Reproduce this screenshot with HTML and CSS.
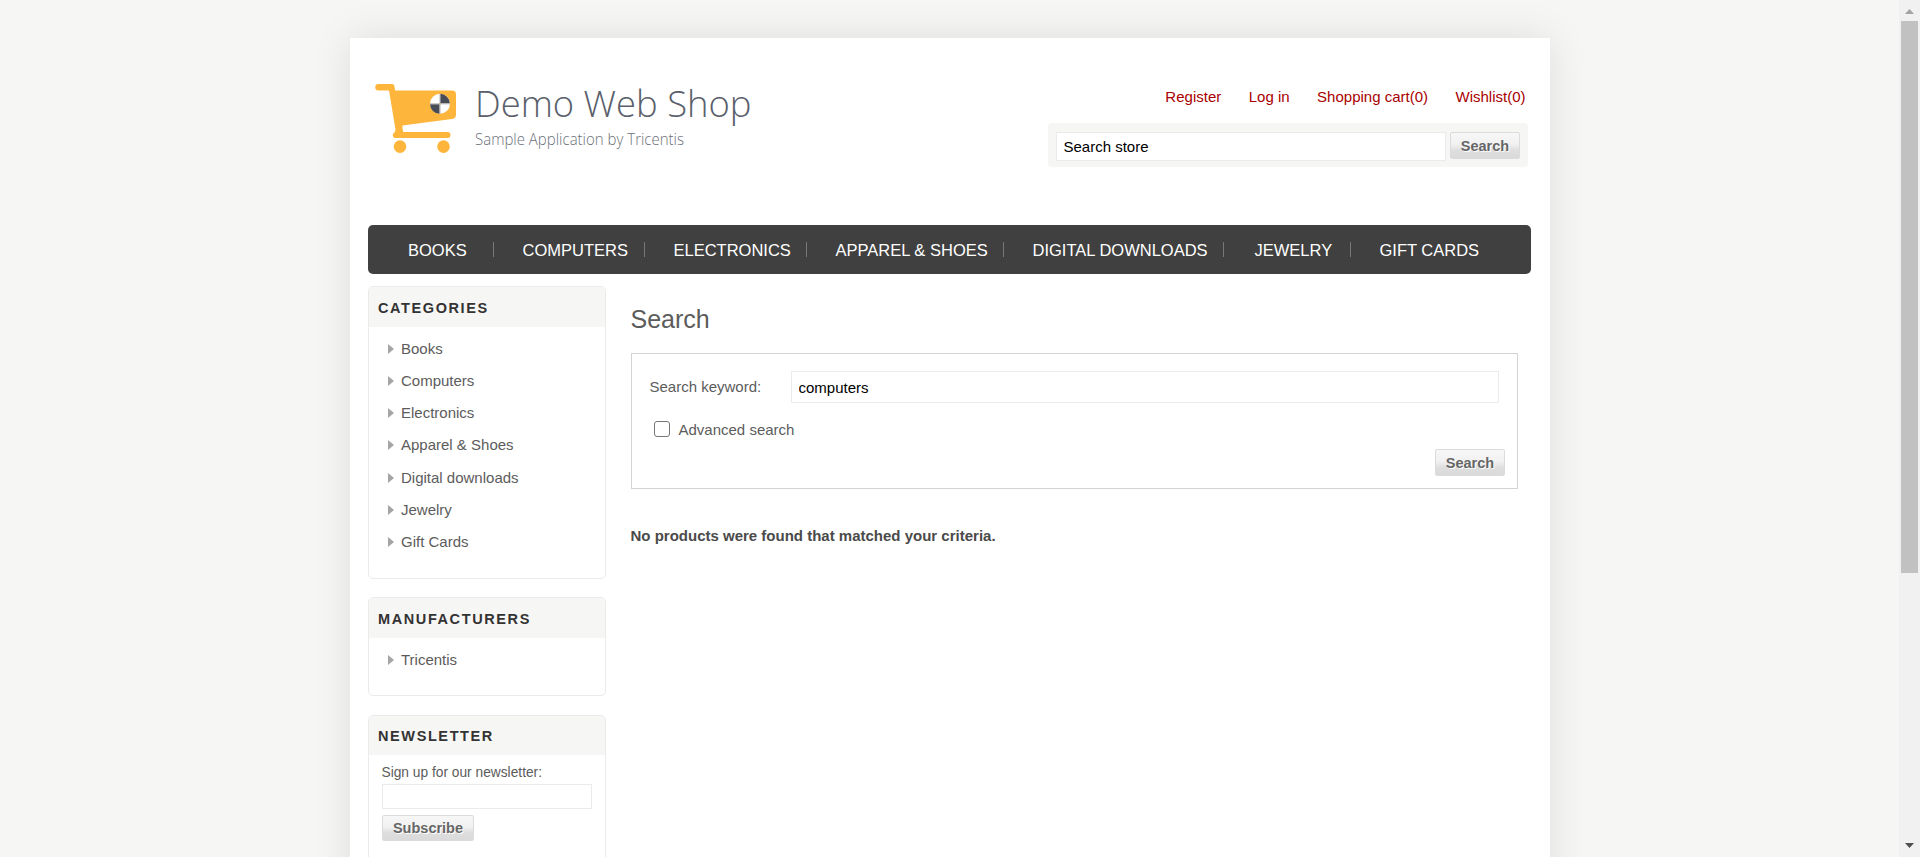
FILE: index.html
```html
<!DOCTYPE html>
<html lang="en">
<head>
<meta charset="utf-8">
<title>Demo Web Shop. Search</title>
<link rel="stylesheet" href="styles.css">
</head>
<body>
<div class="viewport">
  <div class="stage">
    <div class="page">
      <header class="header">
        <svg class="logo" width="400" height="90" viewBox="0 -10 400 90" role="img" aria-label="Demo Web Shop">
          <g fill="#fdb53c">
            <path d="M10.500 6H24a2.500 2.500 0 0 1 2.400 2L27.200 12.500H84q4 0 4 4V36.500q0 4-4 4.500L34.500 47.500V51q1 1 .5 3H79.500a2.900 2.900 0 0 1 0 6H27a3 3 0 0 1-.6-5.600q1.200-.8 1-3.400L21 12.500H10.500a3.250 3.250 0 0 1 0-6.500z"/>
            <circle cx="32" cy="68.600" r="6.300"/>
            <circle cx="75.500" cy="68.600" r="6.300"/>
          </g>
          <circle cx="72" cy="25.800" r="10" fill="#fff"/>
          <path d="M72.300 25.300V15.800a9.700 9.700 0 0 1 9.500 9.500zM71.500 26.300v9.500a9.700 9.700 0 0 1-9.500-9.500z" fill="#474c57"/>
          <path d="M62 25.800H82M72 15.800V35.800" stroke="#a39e94" stroke-width=".8"/>
          <text class="logo-name" x="107" y="39.200" textLength="276.500" lengthAdjust="spacingAndGlyphs">Demo Web Shop</text>
          <text class="logo-tagline" x="107" y="67" textLength="209" lengthAdjust="spacingAndGlyphs">Sample Application by Tricentis</text>
        </svg>
        <div class="header-side">
          <nav class="account-links">
            <a>Register</a><a>Log in</a><a>Shopping cart(0)</a><a>Wishlist(0)</a>
          </nav>
          <form class="search-box">
            <input class="field search-box-field" value="Search store">
            <button type="button" class="button">Search</button>
          </form>
        </div>
      </header>
      <nav class="menu">
        <a class="menu-item menu-books">BOOKS</a>
        <a class="menu-item menu-computers">COMPUTERS</a>
        <a class="menu-item menu-electronics">ELECTRONICS</a>
        <a class="menu-item menu-apparel">APPAREL &amp; SHOES</a>
        <a class="menu-item menu-digital">DIGITAL DOWNLOADS</a>
        <a class="menu-item menu-jewelry">JEWELRY</a>
        <a class="menu-item">GIFT CARDS</a>
      </nav>
      <div class="columns">
        <aside class="sidebar">
          <section class="block block-categories">
            <h2 class="block-title">CATEGORIES</h2>
            <ul class="block-list">
              <li>Books</li><li>Computers</li><li>Electronics</li><li>Apparel &amp; Shoes</li><li>Digital downloads</li><li>Jewelry</li><li>Gift Cards</li>
            </ul>
          </section>
          <section class="block block-manufacturers">
            <h2 class="block-title">MANUFACTURERS</h2>
            <ul class="block-list"><li>Tricentis</li></ul>
          </section>
          <section class="block">
            <h2 class="block-title block-title-newsletter">NEWSLETTER</h2>
            <div class="newsletter">
              <span class="newsletter-label">Sign up for our newsletter:</span>
              <input class="field newsletter-field">
              <button type="button" class="button button-subscribe">Subscribe</button>
            </div>
          </section>
        </aside>
        <main class="main">
          <h1 class="title">Search</h1>
          <form class="search-panel">
            <div class="keyword-row">
              <label class="keyword-label">Search keyword:</label>
              <input class="field keyword-field" value="computers">
            </div>
            <label class="advanced-row"><input type="checkbox" class="checkbox">Advanced search</label>
            <button type="button" class="button panel-button">Search</button>
          </form>
          <strong class="message">No products were found that matched your criteria.</strong>
        </main>
      </div>
    </div>
  </div>
  <div class="scrollbar">
    <svg class="scroll-arrow" width="21" height="21" viewBox="0 0 21 21"><path d="M6 14L10.500 9L15 14z" fill="#a3a3a3"/></svg>
    <div class="scroll-thumb"></div>
    <svg class="scroll-arrow" width="21" height="21" viewBox="0 0 21 21"><path d="M6 7L10.500 12L15 7z" fill="#505050"/></svg>
  </div>
</div>
</body>
</html>
```
FILE: styles.css
```css
* { box-sizing: border-box; }
body {
  margin: 0;
  font-family: "Liberation Sans", Arial, sans-serif;
  font-size: 15px;
  color: #5c5c5c;
}
h1, h2, ul { margin: 0; padding: 0; font-weight: normal; }
.viewport {
  display: flex;
  height: 857px;
  overflow: hidden;
  background: #f6f6f4;
}
.stage {
  flex: 1;
  display: flex;
  justify-content: center;
  padding-top: 38px;
  overflow: hidden;
}
.page {
  width: 1200px;
  height: 1200px;
  flex: none;
  padding: 0 19px 0 18px;
  background: #fff;
  box-shadow: 0 0 38px rgba(0, 0, 0, .1);
}
.header {
  display: flex;
  justify-content: space-between;
  height: 187px;
  padding: 40px 3px 0 0;
}
.logo { display: block; margin-top: -10px; }
.logo-name { font: 300 37px "Open Sans", sans-serif; fill: #5a5f6b; }
.logo-tagline { font: 300 15.500px "Open Sans", sans-serif; fill: #6c707a; }
.header-side { display: flex; flex-direction: column; width: 480px; }
.account-links {
  display: flex;
  justify-content: flex-end;
  gap: 27.500px;
  padding: 10px 2px 0 0;
  height: 45px;
  line-height: 18px;
  color: #a90000;
}
.search-box {
  display: flex;
  align-items: flex-start;
  gap: 4px;
  height: 44px;
  padding: 9px 8px;
  background: #f6f6f4;
  border-radius: 4px;
}
.field {
  display: block;
  border: 1px solid #ebebeb;
  border-radius: 0;
  background: #fff;
  color: #000;
  font: 15px "Liberation Sans", Arial, sans-serif;
  padding: 0 7px;
}
.search-box-field { width: 390px; height: 29px; }
.button {
  display: block;
  width: 70px;
  height: 27px;
  padding: 0 0 0 1px;
  border: 1px solid #dbdbdb;
  border-radius: 2px;
  background: linear-gradient(#f7f7f7 0, #f1f1f1 45%, #dedede 70%, #dadada 100%);
  color: #666;
  font: bold 14.500px "Liberation Sans", Arial, sans-serif;
  text-shadow: 1px 1px 0 #fff;
}
.menu {
  display: flex;
  align-items: center;
  height: 49px;
  padding-left: 10px;
  border-radius: 5px;
  background: #404040;
  color: #fff;
  font-size: 16.500px;
}
.menu-item {
  height: 15px;
  line-height: 17px;
  padding-left: 29px;
  white-space: nowrap;
}
.menu-item + .menu-item { border-left: 1px solid #777; }
.menu-books { width: 115px; padding-left: 30.500px; }
.menu-computers { width: 151px; }
.menu-electronics { width: 162px; }
.menu-apparel { width: 197px; }
.menu-digital { width: 220px; }
.menu-jewelry { width: 127px; padding-left: 31px; }
.columns { display: flex; gap: 25px; padding-top: 12px; }
.sidebar { width: 238px; display: flex; flex-direction: column; gap: 18px; }
.block { border: 1px solid #ebebeb; border-radius: 5px; overflow: hidden; }
.block-categories { height: 293px; }
.block-manufacturers { height: 99px; margin-bottom: 1px; }
.block-title {
  height: 40px;
  padding-left: 9.500px;
  background: #f6f6f4;
  color: #333;
  font-size: 14.500px;
  font-weight: bold;
  line-height: 42px;
  letter-spacing: 1.600px;
}
.block-title-newsletter { height: 39px; line-height: 40px; }
.block-list { list-style: none; padding: 5px 0 0 19px; }
.block-list li {
  display: flex;
  align-items: center;
  gap: 7.500px;
  height: 32.250px;
}
.block-list li::before {
  content: "";
  border: solid transparent;
  border-width: 5.500px 0 5.500px 6px;
  border-left-color: #a5a5a5;
  margin-top: 1px;
}
.newsletter { padding: 8px 13px 30px; }
.newsletter-label { display: block; height: 21px; line-height: 20px; font-size: 13.750px; }
.newsletter-field { width: 210px; height: 25px; margin-bottom: 6px; }
.button-subscribe { width: 92px; height: 26px; }
.main { width: 887px; }
.title { font-size: 25px; line-height: 30px; padding-top: 18px; height: 67px; }
.search-panel { height: 136px; padding: 17px 12px 0 18px; border: 1px solid #d3d3d3; }
.keyword-row { display: flex; }
.keyword-label { width: 141px; line-height: 32px; }
.keyword-field { width: 708px; height: 32px; }
.advanced-row {
  display: flex;
  align-items: center;
  gap: 8.500px;
  height: 20px;
  margin-top: 16px;
  padding-left: 4.500px;
}
.checkbox {
  appearance: none;
  width: 16px;
  height: 16px;
  margin: 0;
  border: 1.500px solid #767676;
  border-radius: 3px;
  background: #fff;
}
.panel-button { margin: 10px 0 0 auto; }
.message { display: block; margin-top: 38px; line-height: 18px; color: #4a4a4a; }
.scrollbar {
  display: flex;
  flex-direction: column;
  justify-content: space-between;
  width: 21px;
  background: #f1f1f1;
}
.scroll-arrow { display: block; }
.scroll-thumb { width: 17px; height: 552px; margin: 0 2px auto; background: #c1c1c1; }
```
